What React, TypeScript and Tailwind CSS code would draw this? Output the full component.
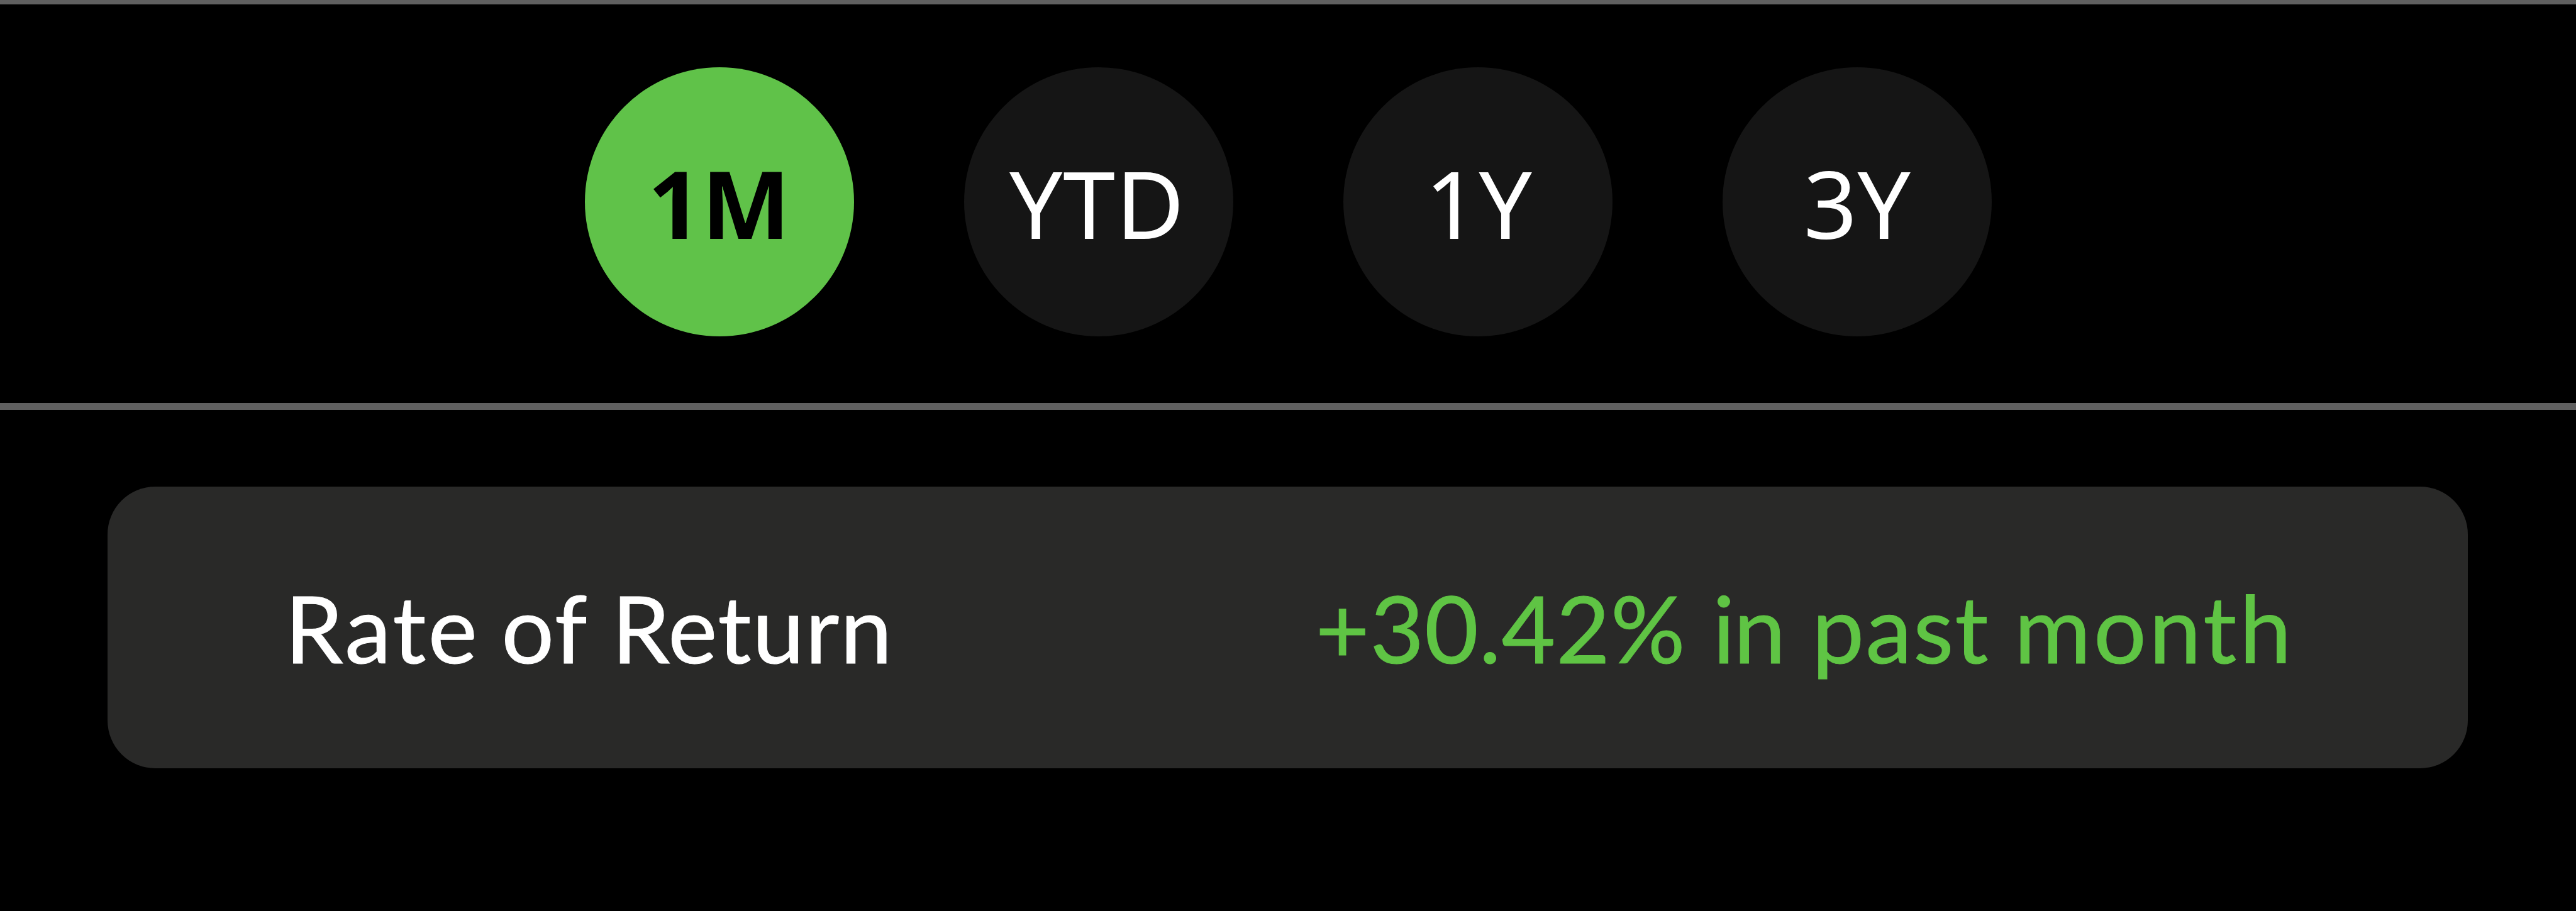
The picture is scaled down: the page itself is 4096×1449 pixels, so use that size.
const ranges = [
  { label: '1M', active: true, spacing: 'tracking-[0.5px]' },
  { label: 'YTD', active: false, spacing: 'pr-[4px] tracking-[1px]' },
  { label: '1Y', active: false, spacing: 'pl-[3px] tracking-[0.5px]' },
  { label: '3Y', active: false, spacing: 'pl-[1px] tracking-[0.5px]' },
];

function RangeButton({ label, active, spacing }: { label: string; active: boolean; spacing: string }) {
  return (
    <button
      className={`flex size-[428px] shrink-0 items-center justify-center rounded-full pt-[3px] font-['Noto_Sans',sans-serif] text-[149px] leading-none ${spacing} ${
        active ? 'bg-[#60c249] font-bold text-black' : 'bg-[#151515] font-normal text-white'
      }`}
    >
      {label}
    </button>
  );
}

export default function App() {
  return (
    <main className="flex h-[1449px] w-[4096px] flex-col overflow-hidden bg-black">
      <nav className="flex h-[652px] shrink-0 items-center justify-center gap-[175px] border-t-[7px] border-b-[11px] border-[#606060] pb-[7px]">
        {ranges.map((range) => (
          <RangeButton key={range.label} {...range} />
        ))}
      </nav>
      <section className="mt-[122px] mr-[172px] ml-[171px] flex h-[448px] shrink-0 items-center justify-between rounded-[76px] bg-[#292928] pr-[276px] pl-[282px] font-['Lato',sans-serif] text-[148px] leading-none whitespace-nowrap [-webkit-text-stroke:1px_currentColor]">
        <p className="text-white">
          <span className="tracking-[3.6px]">Rate</span> <span className="ml-[-3px] tracking-[2.2px]">of</span>{' '}
          <span className="ml-[-1px] tracking-[1.65px]">Return</span>
        </p>
        <p className="text-[#5fc444]">
          <span className="tracking-[0.85px]">+30.42%</span> <span className="ml-[5px] tracking-[-2px]">in</span>{' '}
          <span className="ml-[6px] tracking-[2.2px]">past</span>{' '}
          <span className="ml-[1px] tracking-[4.5px]">month</span>
        </p>
      </section>
    </main>
  );
}
